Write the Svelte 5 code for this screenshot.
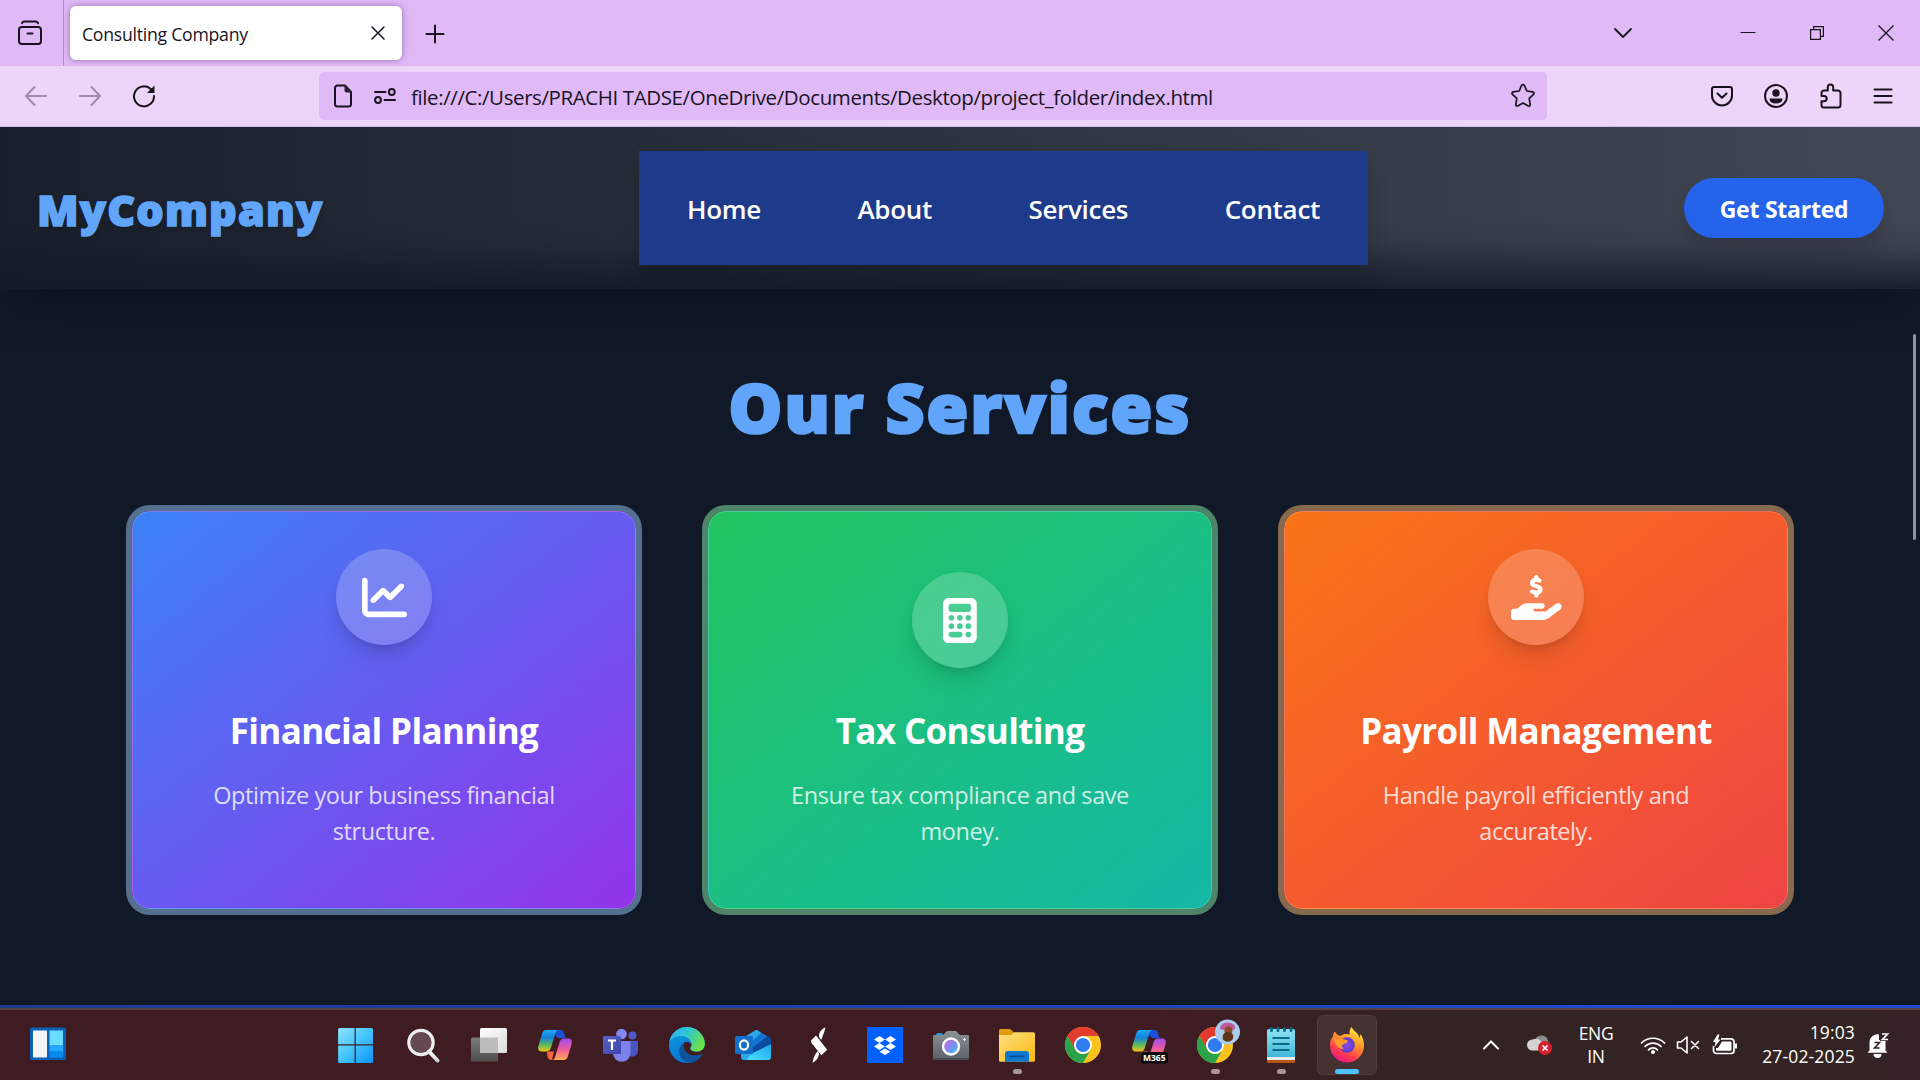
<script>
  const navItems = ['Home', 'About', 'Services', 'Contact'];

  const services = [
    {
      tone: 'blue',
      title: 'Financial Planning',
      text: 'Optimize your business financial structure.',
      box: '0 0 512 512',
      path: 'M64 64c0-17.7-14.3-32-32-32S0 46.3 0 64V400c0 44.2 35.8 80 80 80H480c17.7 0 32-14.3 32-32s-14.3-32-32-32H80c-8.8 0-16-7.2-16-16V64zm406.6 86.6c12.5-12.5 12.5-32.8 0-45.3s-32.8-12.5-45.3 0L320 210.7l-57.4-57.4c-12.5-12.5-32.8-12.5-45.3 0l-112 112c-12.5 12.5-12.5 32.8 0 45.3s32.8 12.5 45.3 0L240 221.3l57.4 57.4c12.5 12.5 32.8 12.5 45.3 0l128-128z'
    },
    {
      tone: 'green',
      title: 'Tax Consulting',
      text: 'Ensure tax compliance and save money.',
      box: '0 0 384 512',
      path: 'M64 0C28.7 0 0 28.7 0 64V448c0 35.3 28.7 64 64 64H320c35.3 0 64-28.7 64-64V64c0-35.3-28.7-64-64-64H64zM96 64H288c17.7 0 32 14.3 32 32v32c0 17.7-14.3 32-32 32H96c-17.7 0-32-14.3-32-32V96c0-17.7 14.3-32 32-32zm32 160a32 32 0 1 1 -64 0 32 32 0 1 1 64 0zM96 352a32 32 0 1 1 0-64 32 32 0 1 1 0 64zM64 416c0-17.7 14.3-32 32-32h96c17.7 0 32 14.3 32 32s-14.3 32-32 32H96c-17.7 0-32-14.3-32-32zM192 256a32 32 0 1 1 0-64 32 32 0 1 1 0 64zm32 64a32 32 0 1 1 -64 0 32 32 0 1 1 64 0zm64-64a32 32 0 1 1 0-64 32 32 0 1 1 0 64zm32 64a32 32 0 1 1 -64 0 32 32 0 1 1 64 0zM288 448a32 32 0 1 1 0-64 32 32 0 1 1 0 64z'
    },
    {
      tone: 'orange',
      title: 'Payroll Management',
      text: 'Handle payroll efficiently and accurately.',
      box: '0 0 576 512',
      path: 'M312 24V34.5c6.4 1.2 12.6 2.7 18.2 4.2c12.8 3.4 20.4 16.6 17 29.4s-16.6 20.4-29.4 17c-10.9-2.9-21.1-4.9-30.2-5c-7.3-.1-14.7 1.7-19.4 4.4c-2.1 1.3-3.1 2.4-3.5 3c-.3 .5-.7 1.2-.7 2.8c0 .3 0 .5 0 .6c.2 .2 .9 1.2 3.3 2.6c5.8 3.5 14.4 6.2 27.4 10.1l.9 .3c11.1 3.3 25.9 7.8 37.9 15.3c13.7 8.6 26.1 22.9 26.4 44.9c.3 22.5-11.4 38.9-26.7 48.5c-6.7 4.1-13.9 7-21.3 8.8V232c0 13.3-10.7 24-24 24s-24-10.7-24-24V220.6c-9.5-2.3-18.2-5.3-25.6-7.8c-2.1-.7-4.1-1.4-6-2c-12.6-4.2-19.4-17.8-15.2-30.4s17.8-19.4 30.4-15.2c2.6 .9 5 1.7 7.3 2.5c13.6 4.6 23.4 7.9 33.9 8.3c8 .3 15.1-1.6 19.2-4.1c1.9-1.2 2.8-2.2 3.2-2.9c.4-.6 .9-1.8 .8-4.1l0-.2c0-1 0-2.1-4-4.6c-5.7-3.6-14.3-6.4-27.1-10.3l-1.9-.6c-10.8-3.2-25-7.5-36.4-14.4c-13.5-8.1-26.5-22-26.6-44.1c-.1-22.9 12.9-38.6 27.7-47.4c6.4-3.8 13.3-6.4 20.2-8.2V24c0-13.3 10.7-24 24-24s24 10.7 24 24zM568.2 336.3c13.1 17.8 9.3 42.8-8.5 55.9L433.1 485.5c-23.4 17.2-51.6 26.5-80.7 26.5H192 32c-17.7 0-32-14.3-32-32V416c0-17.7 14.3-32 32-32H68.8l44.9-36c22.7-18.2 50.9-28 80-28H272h16 64c17.7 0 32 14.3 32 32s-14.3 32-32 32H288 272c-8.8 0-16 7.2-16 16s7.2 16 16 16H392.6l119.7-88.2c17.8-13.1 42.8-9.3 55.9 8.5z'
    }
  ];

  const apps = [
    { id: 'start' }, { id: 'search' }, { id: 'taskview' }, { id: 'copilot' },
    { id: 'teams' }, { id: 'edge' }, { id: 'outlook' }, { id: 'bolt' },
    { id: 'dropbox' }, { id: 'camera' }, { id: 'explorer', open: true }, { id: 'chrome' },
    { id: 'm365' }, { id: 'chrome-user', open: true }, { id: 'notepad', open: true },
    { id: 'firefox', active: true }
  ];
</script>

<svg class="defs" width="0" height="0" aria-hidden="true">
  <defs>
    <linearGradient id="win" x1="0" y1="0" x2="1" y2="1"><stop offset="0" stop-color="#8be3fd" /><stop offset=".5" stop-color="#44c4fb" /><stop offset="1" stop-color="#0a93fb" /></linearGradient>
    <linearGradient id="handle" x1="0" y1="0" x2="0" y2="1"><stop offset="0" stop-color="#fff" /><stop offset="1" stop-color="#cfd3d8" /></linearGradient>
    <linearGradient id="tvback" x1="0" y1="0" x2="0" y2="1"><stop offset="0" stop-color="#7a7a7a" /><stop offset="1" stop-color="#4f4f4f" /></linearGradient>
    <linearGradient id="tvfront" x1="0" y1="0" x2="1" y2="1"><stop offset="0" stop-color="#fff" /><stop offset="1" stop-color="#dcdcdc" /></linearGradient>
    <linearGradient id="copA" x1="0" y1="0" x2="0" y2="1"><stop offset="0" stop-color="#1cabf0" /><stop offset=".35" stop-color="#1480e0" /><stop offset=".7" stop-color="#5fbb5a" /><stop offset="1" stop-color="#f5c414" /></linearGradient>
    <linearGradient id="copB" x1="0" y1="0" x2="0" y2="1"><stop offset="0" stop-color="#a04ef0" /><stop offset=".5" stop-color="#ee5b9c" /><stop offset="1" stop-color="#ffa955" /></linearGradient>
    <linearGradient id="teamsBox" x1="0" y1="0" x2="1" y2="1"><stop offset="0" stop-color="#5a62c8" /><stop offset="1" stop-color="#3b43a8" /></linearGradient>
    <linearGradient id="edgeTop" x1="0" y1="0" x2="1" y2=".4"><stop offset="0" stop-color="#2fb0f5" /><stop offset=".5" stop-color="#2fc5d8" /><stop offset="1" stop-color="#68e04a" /></linearGradient>
    <linearGradient id="edgeLow" x1="0" y1="0" x2=".4" y2="1"><stop offset="0" stop-color="#0c9fd8" /><stop offset="1" stop-color="#0a73d8" /></linearGradient>
    <linearGradient id="mail" x1="0" y1="1" x2="1" y2="0"><stop offset="0" stop-color="#4fe0ff" /><stop offset="1" stop-color="#18a6ec" /></linearGradient>
    <linearGradient id="camBody" x1="0" y1="0" x2="0" y2="1"><stop offset="0" stop-color="#8b9197" /><stop offset="1" stop-color="#5d646b" /></linearGradient>
    <linearGradient id="lens" x1="0" y1="0" x2="1" y2="1"><stop offset="0" stop-color="#d06ae0" /><stop offset=".5" stop-color="#7f8cf0" /><stop offset="1" stop-color="#30c8f0" /></linearGradient>
    <linearGradient id="folder" x1="0" y1="0" x2="1" y2="1"><stop offset="0" stop-color="#ffe082" /><stop offset="1" stop-color="#fbb90f" /></linearGradient>
    <linearGradient id="note" x1="0" y1="0" x2="0" y2="1"><stop offset="0" stop-color="#8be3f2" /><stop offset="1" stop-color="#44b8d8" /></linearGradient>
    <linearGradient id="fox" x1=".8" y1="0" x2=".3" y2="1"><stop offset="0" stop-color="#fff04a" /><stop offset=".4" stop-color="#ff9a2a" /><stop offset=".75" stop-color="#ff3a4c" /><stop offset="1" stop-color="#e8158c" /></linearGradient>
    <radialGradient id="globe"><stop offset="0" stop-color="#8a4bf0" /><stop offset="1" stop-color="#5a3ac8" /></radialGradient>
  </defs>
</svg>

{#snippet chrome()}
  <circle cx="18" cy="18" r="18" fill="#fcc31e" />
  <path d="M2.4 9A18 18 0 0 1 33.6 9H18L10.2 22.5z" fill="#e33b2e" />
  <path d="M2.4 9A18 18 0 0 0 18 36L25.8 22.5A9 9 0 0 1 10.2 22.5z" fill="#2ba24c" />
  <circle cx="18" cy="18" r="9" fill="#fff" />
  <circle cx="18" cy="18" r="7.1" fill="#2f7cf0" />
{/snippet}

{#snippet ribbons()}
  <path d="M19 3h4.500c2 0 2.900 1 3.500 3l1.500 5h-6c-3 0-4-2-4.500-4z" fill="#1a4fd8" />
  <path d="M9 3h13c-2.500 0-3.200 2-4 4.500l-4 13c-.8 2.500-2 4-5 4H5c-3.500 0-4.500-2.500-3.600-5.500L5 7c.8-2.600 2-4 4-4z" fill="url(#copA)" />
  <path d="M10 24.500h7l-2 8.500c-3 0-4-1.500-4.700-4z" fill="#f4663e" />
  <path d="M27 33H14.500c2.500 0 3.300-2 4-4.500l4-13c.8-2.500 2-4 5-4H31c3.500 0 4.500 2.500 3.600 5.500L31 29c-.8 2.600-2 4-4 4z" fill="url(#copB)" />
{/snippet}

<div class="screen">
  <div class="tabstrip">
    <div class="firefox-view">
      <svg width="24" height="26" viewBox="0 0 24 26" fill="none" stroke="#1a121e" stroke-width="2" stroke-linecap="round">
        <path d="M4 3.200C4.600 1.500 5.500 1.500 6.500 1.500h11c1 0 1.900 0 2.500 1.700" />
        <rect x="1" y="7" width="22" height="17" rx="3" />
        <path d="M9.500 13.500h5" />
      </svg>
    </div>
    <div class="tab">
      <span>Consulting Company</span>
      <svg width="14" height="14" viewBox="0 0 14 14" stroke="#1a121e" stroke-width="1.500" stroke-linecap="round"><path d="M1 1l12 12M13 1L1 13" /></svg>
    </div>
    <svg class="plus" width="18" height="18" viewBox="0 0 18 18" stroke="#1a121e" stroke-width="2" stroke-linecap="round"><path d="M9 .5v17M.5 9h17" /></svg>
    <div class="window-buttons">
      <svg class="list" width="20" height="20" viewBox="0 0 20 20" fill="none" stroke="#1a121e" stroke-width="1.800" stroke-linecap="round" stroke-linejoin="round"><path d="M2 6l8 8 8-8" /></svg>
      <svg class="min" width="16" height="16" viewBox="0 0 16 16" stroke="#1a121e"><path d="M.5 7.500h15" /></svg>
      <svg width="16" height="16" viewBox="0 0 16 16" fill="none" stroke="#1a121e" stroke-width="1.200"><path d="M1.600 4.600h9.800v9.800H1.600zM4.600 4.600v-3h9.800v9.800h-3" /></svg>
      <svg width="16" height="16" viewBox="0 0 16 16" stroke="#1a121e" stroke-width="1.300"><path d="M.5.5l15 15M15.500.5l-15 15" /></svg>
    </div>
  </div>

  <div class="toolbar">
    <div class="history">
      <svg class="dim" width="24" height="24" viewBox="0 0 24 24"><path d="M22 12H2M10.500 3L2 12l8.500 9" /></svg>
      <svg class="dim" width="24" height="24" viewBox="0 0 24 24"><path d="M2 12h20M13.500 3L22 12l-8.500 9" /></svg>
      <svg class="dark" width="24" height="24" viewBox="0 0 24 24"><path d="M19 5.200A10 10 0 1 0 22 12" /><path d="M22.500 1.500v7.500h-7.500z" fill="#1a121e" stroke="none" /></svg>
    </div>
    <div class="urlbar">
      <svg class="dark" width="20" height="24" viewBox="0 0 20 24"><path d="M4 1.500h8L18 8v12a2.500 2.500 0 0 1-2.500 2.500h-11A2.500 2.500 0 0 1 2 20V4A2.500 2.500 0 0 1 4.500 1.500" /><path d="M11.500 1v5.500a2 2 0 0 0 2 2H19z" fill="#2b2030" stroke="none" /></svg>
      <svg class="dark perm" width="24" height="18" viewBox="0 0 24 18"><path d="M2 5h10.500M11.500 13H22" /><circle cx="18.800" cy="5" r="2.900" /><circle cx="5" cy="13" r="2.900" /></svg>
      <span>file:///C:/Users/PRACHI TADSE/OneDrive/Documents/Desktop/project_folder/index.html</span>
      <svg class="dark star" width="26" height="26" viewBox="0 0 26 26"><path d="M11.500 2.600q1.500-2 3 0l2.300 5.400 6 .9q2 .8.700 2.500l-4.300 4 1 6.200q-.2 2-2.300 1.200L13 20l-4.900 2.800q-2.100.8-2.300-1.200l1-6.200-4.300-4Q1.200 9.700 3.200 8.900l6-.9z" /></svg>
    </div>
    <div class="tools">
      <svg class="dark" width="24" height="24" viewBox="0 0 24 24"><path d="M4 3h16a2 2 0 0 1 2 2v6.500a10 10 0 0 1-20 0V5a2 2 0 0 1 2-2z" /><path d="M7.500 9.500l4.500 4.300 4.500-4.300" /></svg>
      <svg class="dark" width="24" height="24" viewBox="0 0 24 24"><circle cx="12" cy="12" r="11" /><circle cx="12" cy="9" r="3.700" fill="#1a121e" stroke="none" /><path d="M5.500 14.500h13q0 5-6.500 5t-6.500-5z" fill="#1a121e" stroke="none" /></svg>
      <svg class="dark" width="24" height="26" viewBox="0 0 24 26"><path d="M8.800 7.500V4.300a2.700 2.700 0 0 1 5.400 0v3.200H19a2.500 2.500 0 0 1 2.500 2.500v12A2.500 2.500 0 0 1 19 24.500H5A2.500 2.500 0 0 1 2.500 22v-3.700H5a2.700 2.700 0 0 0 0-5.400H2.500V10A2.500 2.500 0 0 1 5 7.500z" /></svg>
      <svg class="dark" width="20" height="18" viewBox="0 0 20 18"><path d="M1.500 2.500h17M1.500 9h17M1.500 15.500h17" /></svg>
    </div>
  </div>

  <main class="page">
    <header>
      <div class="logo">MyCompany</div>
      <nav>
        {#each navItems as item}<a href="#{item.toLowerCase()}">{item}</a>{/each}
      </nav>
      <button>Get Started</button>
    </header>
    <section>
      <h1>Our Services</h1>
      <div class="cards">
        {#each services as s}
          <article class={s.tone}>
            <div class="badge"><svg height="45" viewBox={s.box}><path d={s.path} fill="#fff" fill-rule="evenodd" /></svg></div>
            <h2>{s.title}</h2>
            <p>{s.text}</p>
          </article>
        {/each}
      </div>
    </section>
    <div class="stripe"></div>
    <div class="scrollbar"></div>
  </main>

  <footer class="taskbar">
    <div class="widgets">
      <svg width="36" height="34" viewBox="0 0 36 34">
        <rect y=".5" width="36" height="32.500" rx="1.500" fill="#0b62b4" /><rect x="3" y="3.500" width="14" height="27" rx="1" fill="#f4f4f4" />
        <rect x="19.500" y="3.500" width="13.500" height="15" fill="#6bdcff" /><rect x="19.500" y="18.500" width="13.500" height="6" fill="#23a9fb" /><rect x="19.500" y="24.500" width="13.500" height="6" fill="#058af0" />
      </svg>
    </div>
    <div class="apps">
      {#each apps as app}
        <div class="app" class:active={app.active} class:open={app.open}>
          <svg width="36" height="36" viewBox="0 0 36 36">
            {#if app.id === 'start'}
              <path d="M-.9 2.500a1.500 1.500 0 0 1 1.500-1.500H15.600V17.200H-.9zM16.800 1H32.500a1.500 1.500 0 0 1 1.500 1.500V17.200H16.800zM-.9 18.500H15.600V36H.6a1.500 1.500 0 0 1-1.500-1.500zM16.800 18.500H34v16a1.500 1.500 0 0 1-1.500 1.500H16.800z" fill="url(#win)" />
            {:else if app.id === 'search'}
              <path d="M24 24.500l8.500 9" stroke="url(#handle)" stroke-width="4" stroke-linecap="round" />
              <circle cx="16" cy="15.500" r="12.200" fill="#fff" fill-opacity=".2" stroke="#eceef0" stroke-width="3.200" />
            {:else if app.id === 'taskview'}
              <rect y="10.500" width="27" height="24" rx="1.500" fill="url(#tvback)" /><rect x="9" y="1" width="27" height="25" rx="1.500" fill="url(#tvfront)" /><path d="M9 10.500H27V26H9z" fill="#bcbcbc" />
            {:else if app.id === 'copilot'}
              {@render ribbons()}
            {:else if app.id === 'teams'}
              <circle cx="29.500" cy="8.500" r="4" fill="#5059c9" /><path d="M24 14h11v10a6 6 0 0 1-8.500 5z" fill="#4c55c4" />
              <circle cx="18.500" cy="7" r="5.300" fill="#8289f0" /><path d="M10 14h17.500v12a8.700 8.700 0 0 1-17.500 0z" fill="#7b83eb" />
              <rect y="9" width="18" height="18" rx="1.500" fill="url(#teamsBox)" /><path d="M5 13.500h8M9 13.500V23" stroke="#fff" stroke-width="2.200" />
            {:else if app.id === 'edge'}
              <circle cx="18" cy="18" r="18" fill="url(#edgeLow)" />
              <path d="M.2 15.500A18 18 0 0 1 36 17c0 4.700-3.500 7.800-8 7.800-4.200 0-7-1.600-6.800-3.600.2-1.200 1.300-1.800 1.300-4C22.500 13 18.500 9 12 9 6 9 1.500 12 .2 15.500z" fill="url(#edgeTop)" />
              <path d="M15 15.500c-5 4-6.500 10-3 15 3 4 7 5.400 11 4.800 5-1 8.500-4 10.300-7.600.3-.8-.3-1.200-1-.8C25 30.500 15.500 27.500 14.500 20c-.2-1.700 0-3.200.5-4.500z" fill="#0c529c" />
              <path d="M33.300 27.700L36 24V17c0 4.700-3.500 7.800-8 7.800-4.200 0-7-1.600-6.800-3.600.2-1.400 1.300-2 1.300-4A6 6 0 0 0 15 15.500c-.5 1.300-.7 2.800-.5 4.500 1 7.500 10.500 10.500 17.800 6.900.7-.4 1.300 0 1 .8z" fill="#3f1c22" />
            {:else if app.id === 'outlook'}
              <path d="M6 12L20 3.500c1-.6 2-.6 3 0L35 12v18a3 3 0 0 1-3 3H9a3 3 0 0 1-3-3z" fill="#29a9ea" />
              <path d="M16 21L33 8.500l3 3v8L20 29z" fill="#0b4a9c" /><path d="M14 17L26 6l6 3-16 13z" fill="#1173d4" /><path d="M36 17v13a3 3 0 0 1-3 3H12c2-5 7-8 11-9.500z" fill="url(#mail)" />
              <rect y="9" width="18" height="18" rx="1.500" fill="#1170cc" /><ellipse cx="9" cy="18" rx="4.100" ry="4.600" fill="none" stroke="#fff" stroke-width="2.200" />
            {:else if app.id === 'bolt'}
              <path d="M24.500.2C19.500 2.500 17.800 6 18 10.200l2.200 2.800C22 8.500 23.500 4.500 24.500.2zM10 13.500l5-5L26.200 22.700l-5.800 5.600L10.500 16zM11.500 35.800c3.500-1.800 5.700-4.300 6.500-8l-.8-4.300C14 26.500 12.300 31 11.500 35.800z" fill="#fff" />
            {:else if app.id === 'dropbox'}
              <path d="M0 0h36v36H0z" fill="#0061fe" /><path d="M12.500 9L7 12.500l5.500 3.500 5.500-3.500zM23.500 9L18 12.500l5.500 3.500 5.500-3.500zM12.500 16L7 19.500l5.500 3.500 5.500-3.500zM23.500 16L18 19.500l5.500 3.500 5.500-3.500zM18 21.500l-5.500 3.300L18 28l5.500-3.200z" fill="#fff" />
            {:else if app.id === 'camera'}
              <path d="M3 8.500A2.500 2.500 0 0 1 5.500 6h2A2.500 2.500 0 0 1 10 8.500z" fill="#1ca0e0" /><path d="M1 8h9l4-4h9l4 4h8a1 1 0 0 1 1 1v22H0V9a1 1 0 0 1 1-1z" fill="url(#camBody)" /><path d="M0 31h36v2H0z" fill="#454c53" />
              <circle cx="18" cy="19.500" r="9.200" fill="#fff" /><circle cx="18" cy="19.500" r="6.800" fill="url(#lens)" /><path d="M31.500 11v3M30 12.500h3" stroke="#e0e4e8" />
            {:else if app.id === 'explorer'}
              <path d="M0 3.500A1.500 1.500 0 0 1 1.500 2H11l4 3.500V10H0z" fill="#e09c0a" /><path d="M0 8h12l3.500-2.800H34.500a1.500 1.500 0 0 1 1.500 1.500V33.500a1.300 1.300 0 0 1-1.300 1.300H1.300A1.300 1.300 0 0 1 0 33.500z" fill="url(#folder)" />
              <path d="M6 34.800V27a3 3 0 0 1 3-3H27a3 3 0 0 1 3 3v7.800z" fill="#0d78cf" /><path d="M11 29.300h14" stroke="#0b4c92" stroke-width="1.800" stroke-linecap="round" />
            {:else if app.id === 'chrome'}
              {@render chrome()}
            {:else if app.id === 'm365'}
              {@render ribbons()}
              <rect x="10" y="25" width="27" height="11.500" rx="1.500" fill="#0b0b0b" />
              <text x="23.200" y="33.700" text-anchor="middle" class="m365">M365</text>
            {:else if app.id === 'chrome-user'}
              {@render chrome()}
              <circle cx="30.500" cy="5" r="12.500" fill="#a9cdec" /><path d="M23 2c0-4 4-7 8-6.500s7 2 7.500 5.500l-2 2-5-2-5 2z" fill="#c05a9c" /><circle cx="31.500" cy="3.500" r="4" fill="#8b4a2c" /><path d="M26 12.500c-1-5 1-7.500 5-7.500s6.500 3 4.500 7.500c-3 3-6.500 3-9.500 0z" fill="#5e3319" />
            {:else if app.id === 'notepad'}
              <path d="M4 32h28v3a1 1 0 0 1-1 1H5a1 1 0 0 1-1-1z" fill="#b4560e" /><path d="M4 29h28v4H4z" fill="#ececec" /><path d="M4 4a2 2 0 0 1 2-2h24a2 2 0 0 1 2 2v26H4z" fill="url(#note)" />
              <path d="M9.500 11H26.500M9.500 17H26.500M9.500 23H26.500" stroke="#0d6a8c" stroke-width="2" /><path d="M8.500 1.500v2M15 1.500v2M21.500 1.500v2M28 1.500v2" stroke="#0d6a8c" stroke-width="3" stroke-linecap="round" />
            {:else}
              <path d="M22.500 0c-1.500 2-2.500 4.500-1.800 7.500C17 6.500 14 7 11.500 9 8.500 8.500 7 6.500 5.800 4.500 4.500 6 4 7.500 4 9.500 1.500 12 .9 15.500 1 18.500a17 17 0 0 0 34 0c0-5-1.500-9-3.800-11.700.2 1.700 0 3-.5 4C29.500 6 25 4.500 22.500 0z" fill="url(#fox)" />
              <circle cx="18" cy="18" r="7.800" fill="url(#globe)" /><path d="M4.500 11c4 1.500 7.500.5 11.500 1.500 2 .5 3 1.500 3 2.500-1.500 1.500-4.500 1.500-6 3.500 0 2 1 3 2.500 4-5 0-9.500-4-11-11.500z" fill="#ff9a2c" />
            {/if}
          </svg>
        </div>
      {/each}
    </div>
    <div class="tray">
      <svg class="up" width="18" height="12" viewBox="0 0 18 12" fill="none" stroke="#fff" stroke-width="2" stroke-linecap="round"><path d="M2 9.500L9 2.500l7 7" /></svg>
      <svg class="cloud" width="26" height="22" viewBox="0 0 26 22"><path d="M8 6c2-6 12-6 13 1l2 4H8z" fill="#8c8c8c" /><path d="M5.500 16.500a5.500 5.500 0 0 1 0-11c5-2 9 0 10 5v6z" fill="#d4d4d4" /><circle cx="18" cy="14" r="7" fill="#d4202c" /><path d="M15.500 11.500l5 5M20.500 11.500l-5 5" stroke="#fff" stroke-width="1.700" /></svg>
      <div class="lang"><span>ENG</span><span>IN</span></div>
      <svg class="wifi" width="26" height="20" viewBox="0 0 26 20" fill="none" stroke="#fff" stroke-width="1.700" stroke-linecap="round"><path d="M1.500 8a16.300 16.300 0 0 1 23 0M5 11.500a11.300 11.300 0 0 1 16 0M8.500 14.800a6.300 6.300 0 0 1 9 0" /><circle cx="13" cy="17" r="2" fill="#fff" stroke="none" /></svg>
      <svg class="mute" width="25" height="20" viewBox="0 0 25 20" fill="none" stroke="#fff" stroke-width="1.600" stroke-linecap="round" stroke-linejoin="round"><path d="M1.500 7v6H5l6 5V2L5 7zM15.500 6.500l7 7M22.500 6.500l-7 7" /></svg>
      <svg class="battery" width="26" height="22" viewBox="0 0 26 22"><path d="M9 4.800h10a3 3 0 0 1 3 3v8.700a3 3 0 0 1-3 3H4.500a3 3 0 0 1-3-3V12" fill="none" stroke="#fff" stroke-width="1.700" /><path d="M23 9.500h2v5h-2zM10 7.500h8.500a1 1 0 0 1 1 1v7.300a1 1 0 0 1-1 1H5a1 1 0 0 1-1-1V14h2z" fill="#fff" /><path d="M5.500.5L1 8h2.500L2.500 13 8.500 5.500H6l1.500-5z" fill="#fff" /></svg>
      <div class="clock"><span>19:03</span><span>27-02-2025</span></div>
      <svg class="bell" width="22" height="26" viewBox="0 0 22 26"><path d="M2.500 18.500V10A8 8 0 0 1 12 2.500V8h6.500v10.500l2 2.300H.5zM6.500 22h8a4 4 0 0 1-8 0z" fill="#fff" /><path d="M7.500 10.500h5L7.500 16h5.200" fill="none" stroke="#332323" stroke-width="1.600" /><path d="M13 0h8v9h-8z" fill="#342324" /><path d="M15 2h5.500l-5 5.500h5.500" fill="none" stroke="#fff" stroke-width="1.700" /></svg>
    </div>
  </footer>
</div>

<style>
  :global(body) { margin: 0; background: #111827; }
  .defs { position: absolute; }
  .screen { width: 1920px; height: 1080px; display: flex; flex-direction: column; overflow: hidden; font-family: "Open Sans", "Noto Sans", sans-serif; color: #fff; }
  svg { display: block; flex: none; overflow: visible; }
  span { white-space: nowrap; }

  .tabstrip { height: 66px; flex: none; display: flex; align-items: center; background: #e0baf7; }
  .firefox-view { box-sizing: border-box; width: 64px; height: 66px; padding: 20px 0 0 18px; border-right: 1px solid #b08fc4; }
  .tab { box-sizing: border-box; width: 332px; height: 54px; margin-left: 6px; padding: 0 17px 0 12px; display: flex; align-items: center; justify-content: space-between; background: #fff; border-radius: 6px; box-shadow: 0 0 6px rgba(80, 40, 110, .5); color: #1a121e; font-size: 17.700px; letter-spacing: -.27px; }
  .tab span { padding-top: 2px; }
  .plus { margin: 2px 0 0 23.500px; }
  .window-buttons { margin-left: auto; margin-right: 26px; display: flex; align-items: center; gap: 53px; }
  .min { margin-left: 54px; }

  .toolbar { box-sizing: border-box; height: 61px; flex: none; display: flex; align-items: center; background: #edd5f9; border-bottom: 1px solid #dcb8ee; }
  .history { display: flex; gap: 30px; margin: -1px 0 0 24px; width: 295px; }
  .dim { fill: none; stroke: #a28bb0; stroke-width: 2; stroke-linecap: round; stroke-linejoin: round; }
  .dark { fill: none; stroke: #1a121e; stroke-width: 2; stroke-linecap: round; stroke-linejoin: round; }
  .urlbar { box-sizing: border-box; width: 1228px; height: 48px; padding: 0 11px 0 14px; display: flex; align-items: center; background: #e0baf7; border-radius: 5px; color: #1a121e; font-size: 20.500px; letter-spacing: -.4px; }
  .urlbar span { padding-top: 2px; }
  .perm { margin: 0 14px 0 20px; }
  .star { margin-left: auto; stroke-width: 1.700; }
  .tools { display: flex; align-items: center; gap: 30.500px; margin: -1px 0 0 162.500px; }

  .page { position: relative; height: 881px; flex: none; overflow: hidden; background: #111827; }
  .stripe { height: 3px; background: linear-gradient(to right, #1e3a8a, #1d4ed8); }
  header { box-sizing: border-box; position: relative; height: 162px; padding: 0 36px; display: flex; align-items: center; justify-content: space-between; background: linear-gradient(to bottom, rgba(17, 24, 39, 0) 56%, rgba(17, 24, 39, .13) 72%, rgba(17, 24, 39, .5) 87%, rgba(17, 24, 39, .83) 100%), linear-gradient(to right, #19202b, #414753); box-shadow: 0 25px 50px -12px rgba(0, 0, 0, .27); }
  .logo { width: 603px; padding: 2px 0 0 1px; box-sizing: border-box; font-size: 43px; font-weight: 800; letter-spacing: 1.200px; -webkit-text-stroke: 1.600px #60a5fa; color: #60a5fa; text-shadow: 0 4px 8px rgba(0, 0, 0, .2); }
  nav { box-sizing: border-box; width: 729px; height: 114px; padding: 2px 48px 0 48px; display: flex; align-items: center; justify-content: space-between; background: #1e3a8a; box-shadow: 0 10px 20px rgba(0, 0, 0, .15); }
  nav a { color: #fff; text-decoration: none; font-size: 26px; font-weight: 600; letter-spacing: -.3px; }
  button { width: 200px; height: 60px; margin-left: 316px; padding: 2px 0 0; border: 0; border-radius: 30px; background: #2563eb; box-shadow: 0 10px 15px rgba(0, 0, 0, .12); color: #fff; font: 700 23px "Open Sans", sans-serif; letter-spacing: -.25px; }
  section { height: 716px; display: flex; flex-direction: column; align-items: center; }
  h1 { margin: 64px 0 0; height: 158px; font-size: 67.500px; line-height: 108px; font-weight: 800; letter-spacing: 2.200px; -webkit-text-stroke: 2.600px #60a5fa; color: #60a5fa; }
  .cards { display: flex; gap: 72px; }
  article { box-sizing: border-box; width: 504px; height: 398px; padding: 37px 60px 0; display: flex; flex-direction: column; align-items: center; border: 1px solid rgba(255, 255, 255, .2); border-radius: 18px; text-align: center; }
  .blue { background: linear-gradient(to bottom right, #3b82f6, #9333ea); box-shadow: 0 0 0 6px #54708f; }
  .green { background: linear-gradient(to bottom right, #22c55e, #14b8a6); box-shadow: 0 0 0 6px #4e8468; }
  .orange { background: linear-gradient(to bottom right, #f97316, #ef4444); box-shadow: 0 0 0 6px #876a4d; }
  .badge { width: 96px; height: 96px; flex: none; margin-bottom: 61px; display: flex; align-items: center; justify-content: center; border-radius: 50%; background: rgba(255, 255, 255, .2); box-shadow: 0 15px 23px -4px rgba(0, 0, 0, .12), 0 6px 9px -3px rgba(0, 0, 0, .1); }
  .green .badge { margin-top: 23px; margin-bottom: 38px; }
  h2 { margin: 0; font-size: 35px; line-height: 50px; font-weight: 700; letter-spacing: -.63px; white-space: nowrap; }
  p { margin: 21px 0 0; font-size: 23.500px; line-height: 36px; letter-spacing: -.42px; color: rgba(255, 255, 255, .8); }
  .scrollbar { position: absolute; left: 1913px; top: 207px; width: 3px; height: 206px; border-radius: 2px; background: #8d9198; }

  .taskbar { box-sizing: border-box; height: 72px; flex: none; display: flex; align-items: center; background: linear-gradient(to right, #3f1c22 0, #3f1c22 1150px, #352323 1400px, #332323 1850px, #382226 1920px); border-top: 2px solid #5a4144; }
  .widgets { width: 297px; margin-top: -2px; padding-left: 30px; }
  .apps { display: flex; gap: 6px; }
  .app { position: relative; box-sizing: border-box; width: 60px; height: 60px; margin-top: -1px; display: flex; align-items: center; justify-content: center; border-radius: 6px; }
  .app.active { background: rgba(255, 255, 255, .07); box-shadow: inset 0 0 0 1px rgba(255, 255, 255, .06); }
  .app.open::after, .app.active::after { content: ""; position: absolute; bottom: 1px; left: 26px; width: 9px; height: 5px; border-radius: 3px; background: #a8979a; }
  .app.active::after { left: 18px; width: 24px; background: #4cc2ff; }
  .m365 { font: 700 8.500px "Open Sans", sans-serif; fill: #fff; }
  .tray { flex: 1; display: flex; align-items: center; font-size: 17.500px; line-height: 24px; }
  .up { margin-left: 105px; }
  .cloud { margin-left: 27px; }
  .lang { width: 40px; margin-left: 23px; display: flex; flex-direction: column; align-items: center; line-height: 23px; letter-spacing: -.3px; }
  .wifi { margin-left: 24px; }
  .mute { margin-left: 10px; }
  .battery { margin-left: 11px; }
  .clock { width: 105px; margin: -3px 0 0 12px; display: flex; flex-direction: column; align-items: flex-end; letter-spacing: .15px; }
  .bell { margin-left: 12px; }
</style>
